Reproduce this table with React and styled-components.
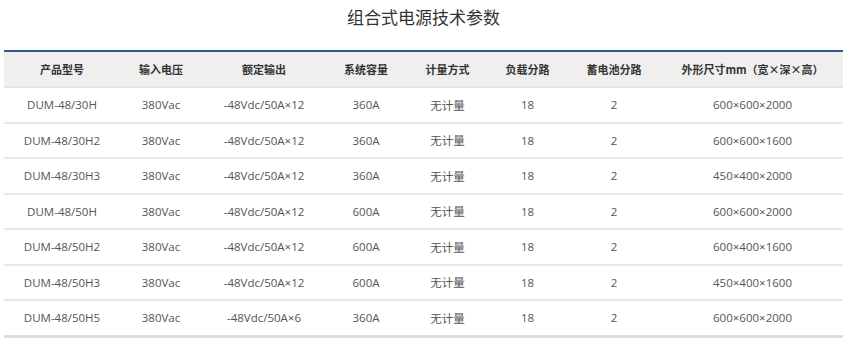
import React from "react";
import styled, { createGlobalStyle } from "styled-components";

const Global = createGlobalStyle`
  html, body { margin: 0; padding: 0; background: #fff; }
  body { font-family: "Open Sans", "Noto Sans CJK SC", sans-serif; }
`;

const Page = styled.div`
  width: 839px;
  margin-left: 4px;
`;

const Title = styled.h2`
  margin: 0;
  height: 50px;
  line-height: 34px;
  text-align: center;
  font-family: "Noto Sans CJK SC", sans-serif;
  font-size: 17px;
  font-weight: 400;
  color: #333;
`;

const Table = styled.table`
  width: 839px;
  table-layout: fixed;
  border-collapse: collapse;
  border-top: 2px solid #2c5a98;
  border-bottom: 3px solid #dcdcdc;
`;

const HeadRow = styled.tr`
  background: #efefef;
  border-bottom: 2px solid #e3e3e3;
`;

const Th = styled.th`
  height: 34px;
  padding: 0;
  text-align: center;
  font-family: "Noto Sans CJK SC", sans-serif;
  font-size: 11px;
  font-weight: 700;
  color: #333;
`;

const Row = styled.tr`
  border-bottom: ${(p) => (p.$last ? "none" : "2px solid #e8e8e8")};
`;

const Td = styled.td`
  height: 33.5px;
  padding: 0;
  text-align: center;
  font-size: 11.5px;
  color: #555;
  white-space: nowrap;
`;

const widths = [116, 82, 124, 80, 83, 77, 96, 181];
const headers = ["产品型号", "输入电压", "额定输出", "系统容量", "计量方式", "负载分路", "蓄电池分路", "外形尺寸mm（宽×深×高）"];
const rows = [
  ["DUM-48/30H", "380Vac", "-48Vdc/50A×12", "360A", "无计量", "18", "2", "600×600×2000"],
  ["DUM-48/30H2", "380Vac", "-48Vdc/50A×12", "360A", "无计量", "18", "2", "600×600×1600"],
  ["DUM-48/30H3", "380Vac", "-48Vdc/50A×12", "360A", "无计量", "18", "2", "450×400×2000"],
  ["DUM-48/50H", "380Vac", "-48Vdc/50A×12", "600A", "无计量", "18", "2", "600×600×2000"],
  ["DUM-48/50H2", "380Vac", "-48Vdc/50A×12", "600A", "无计量", "18", "2", "600×400×1600"],
  ["DUM-48/50H3", "380Vac", "-48Vdc/50A×12", "600A", "无计量", "18", "2", "450×400×1600"],
  ["DUM-48/50H5", "380Vac", "-48Vdc/50A×6", "360A", "无计量", "18", "2", "600×600×2000"],
];

export default function App() {
  return (
    <Page>
      <Global />
      <Title>组合式电源技术参数</Title>
      <Table>
        <colgroup>
          {widths.map((w, i) => (
            <col key={i} style={{ width: w }} />
          ))}
        </colgroup>
        <thead>
          <HeadRow>
            {headers.map((h) => (
              <Th key={h}>{h}</Th>
            ))}
          </HeadRow>
        </thead>
        <tbody>
          {rows.map((r, i) => (
            <Row key={r[0]} $last={i === rows.length - 1}>
              {r.map((c, j) => (
                <Td key={j}>{c}</Td>
              ))}
            </Row>
          ))}
        </tbody>
      </Table>
    </Page>
  );
}
